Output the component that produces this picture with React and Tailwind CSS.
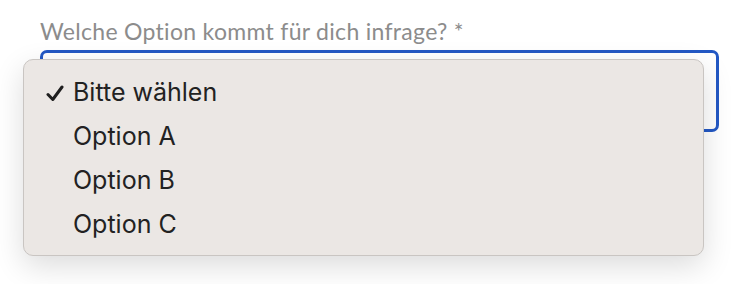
import React from "react";

const options = ["Bitte wählen", "Option A", "Option B", "Option C"];

const Check = () => (
  <svg width="18" height="17" viewBox="0 0 18 17" className="absolute left-[22px] top-[14px]">
    <path d="M2 9.5 L6.8 14.5 L16 2" fill="none" stroke="#1f1f1f" strokeWidth="3" strokeLinecap="round" strokeLinejoin="round" />
  </svg>
);

const App = () => {
  return (
    <div className="w-[742px] h-[284px] bg-white overflow-hidden">
      <div className="pl-[40px] pr-[23px] pt-[16px]">
        <label className="block text-[23px] leading-[30px] text-[#8c8c8c] font-['Lato',sans-serif] tracking-[0.3px]">
          Welche Option kommt für dich infrage? *
        </label>

        {/* select box */}
        <div className="relative mt-[4px] w-[679px] h-[82px] border-[3px] border-[#2358c4] rounded-[7px] bg-white">
          {/* open menu */}
          <div className="absolute left-[-20px] top-[6px] w-[681px] h-[197px] rounded-[10px] bg-[#ebe7e4] border border-[#c9c5c2] shadow-[0_10px_30px_rgba(0,0,0,0.14)] pt-[11px] pb-[9px]">
            {options.map((opt, i) => (
              <div key={opt} className="relative h-[44px] flex items-center pl-[49px] text-[25px] text-[#222] font-['Inter',sans-serif]">
                {i === 0 && <Check />}
                {opt}
              </div>
            ))}
          </div>
        </div>
      </div>
    </div>
  );
};

export default App;
